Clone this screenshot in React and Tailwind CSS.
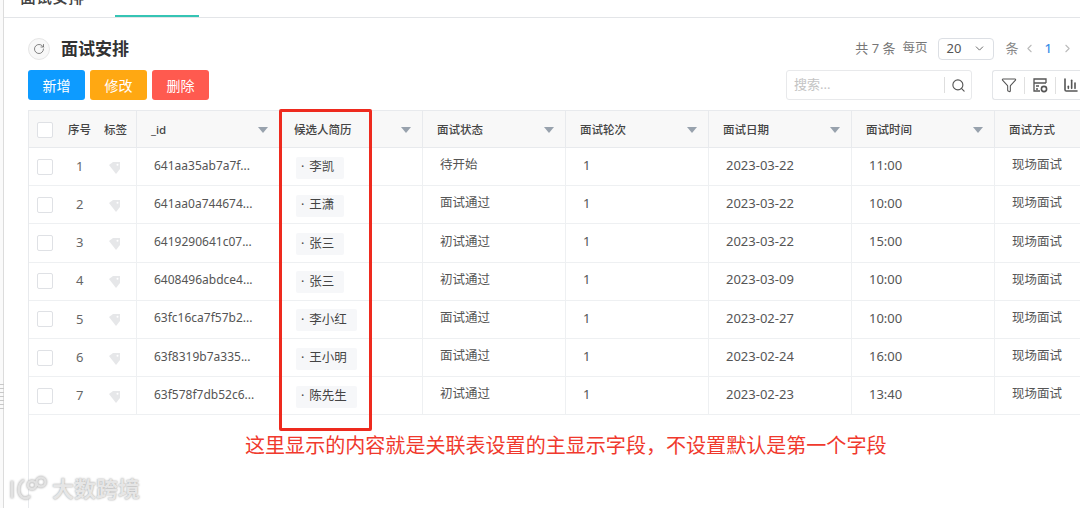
import { RotateCw, ChevronDown, ChevronLeft, ChevronRight, Search, Funnel, ChartColumn } from "lucide-react"

const FONT = { fontFamily: '"Noto Sans", "Noto Sans CJK SC", sans-serif' }

const COLUMNS = ["面试状态", "面试轮次", "面试日期", "面试时间"]

const ROWS = [
  { id: "641aa35ab7a7f...", name: "李凯", status: "待开始", date: "2023-03-22", time: "11:00" },
  { id: "641aa0a744674...", name: "王潇", status: "面试通过", date: "2023-03-22", time: "10:00" },
  { id: "6419290641c07...", name: "张三", status: "初试通过", date: "2023-03-22", time: "15:00" },
  { id: "6408496abdce4...", name: "张三", status: "初试通过", date: "2023-03-09", time: "10:00" },
  { id: "63fc16ca7f57b2...", name: "李小红", status: "面试通过", date: "2023-02-27", time: "10:00" },
  { id: "63f8319b7a335...", name: "王小明", status: "面试通过", date: "2023-02-24", time: "16:00" },
  { id: "63f578f7db52c6...", name: "陈先生", status: "初试通过", date: "2023-02-23", time: "13:40" },
]

function Caret() {
  return <span className="ml-auto mr-[11px] h-0 w-0 border-x-[5px] border-t-[6px] border-x-transparent border-t-[#98a2ad]" />
}

function Checkbox() {
  return <span className="h-[16px] w-[16px] shrink-0 rounded-[2px] border border-[#dfe1e5] bg-white" />
}

function HeadCell({ label, caret = true, className = "w-[143px]" }) {
  return (
    <div className={`flex h-full shrink-0 items-center border-r border-[#e8eaed] pl-[14px] pt-[1px] text-[11.5px] font-medium text-[#444] ${className}`}>
      {label}
      {caret && <Caret />}
    </div>
  )
}

function Cell({ children, className = "" }) {
  return (
    <div className={`flex h-full w-[143px] shrink-0 items-center border-r border-[#eef0f2] pb-[2px] pl-[17px] text-[#555] ${className}`}>
      {children}
    </div>
  )
}

function TagIcon() {
  return (
    <svg width="14" height="14" viewBox="0 0 14 14" className="ml-[25px] mt-[2px]">
      <path d="M1 4 L5 1 H12 V8 L8 13 Z" fill="#e6e7e9" />
      <circle cx="9.5" cy="3.8" r="1" fill="#fff" />
    </svg>
  )
}

function ConfigIcon() {
  return (
    <svg width="16" height="16" viewBox="0 0 16 16" fill="none" stroke="#555" strokeWidth="1.3">
      <path d="M14 6V2H2v12h6" />
      <path d="M2 6h12M4 9h3M4 12h2" />
      <circle cx="12" cy="12" r="2.6" strokeWidth="1.6" />
    </svg>
  )
}

function Toolbar() {
  return (
    <div className="flex h-[30px] w-[100px] shrink-0 items-center rounded-l-[3px] border-y border-l border-[#e3e5e8] bg-white pl-[8px] text-[#555]">
      <Funnel size={16} strokeWidth={1.6} />
      <span className="mx-[7px] h-[17px] border-l border-[#e0e0e0]" />
      <ConfigIcon />
      <span className="mx-[7px] h-[17px] border-l border-[#e0e0e0]" />
      <ChartColumn size={16} strokeWidth={2.4} />
    </div>
  )
}

export default function App() {
  return (
    <div className="relative h-[508px] w-[1080px] overflow-hidden bg-white" style={FONT}>
      {/* Top tabs */}
      <div className="ml-[4px] flex h-[18px] items-end overflow-hidden border-b border-[#e3e5e8] pl-[16px]">
        <div className="mb-[9px] w-[95px] shrink-0 text-[16px] font-medium leading-[22px] text-[#444]">面试安排</div>
        <div className="h-[2px] w-[84px] bg-[#35c4b4]" />
      </div>

      <div className="absolute bottom-0 left-0 top-0 w-[4px] border-r border-[#dcdcdc] bg-[#fafafa]" />
      <div className="absolute left-0 top-[384px] flex w-[4px] flex-col gap-[3px]">
        {[0, 1, 2, 3, 4, 5, 6].map((n) => (
          <span key={n} className="h-px w-full bg-[#c8c8c8]" />
        ))}
      </div>

      <div className="pl-[28px]">
        {/* Title and pagination */}
        <div className="flex h-[52px] items-center pr-[6px] pt-[9px]">
          <span className="flex h-[22px] w-[22px] items-center justify-center rounded-full border border-[#e6e6e6] bg-[#f8f8f8] text-[#666]">
            <RotateCw size={12} strokeWidth={1.6} />
          </span>
          <span className="ml-[11px] text-[17px] font-bold text-[#333]">面试安排</span>
          <span className="ml-auto text-[13px] text-[#777]">共 7 条</span>
          <span className="ml-[7px] text-[12.5px] text-[#777]">每页</span>
          <span className="ml-[10px] flex h-[22px] w-[56px] items-center justify-between rounded-[4px] border border-[#dcdfe4] pl-[8px] pr-[7px] text-[13px] text-[#555]">
            20
            <ChevronDown size={13} strokeWidth={1.6} />
          </span>
          <span className="ml-[12px] text-[13px] text-[#888]">条</span>
          <ChevronLeft size={13} className="ml-[4px] text-[#bbb]" />
          <span className="ml-[9px] text-[13px] font-medium text-[#3f8fe8]">1</span>
          <ChevronRight size={13} className="ml-[9px] text-[#bbb]" />
        </div>

        {/* Buttons and search */}
        <div className="flex h-[30px] items-center">
          <button className="h-[30px] w-[57px] shrink-0 rounded-[3px] bg-[#0d9bff] text-[14px] text-white">新增</button>
          <button className="ml-[5px] h-[30px] w-[57px] shrink-0 rounded-[3px] bg-[#ffa812] text-[14px] text-white">修改</button>
          <button className="ml-[5px] h-[30px] w-[57px] shrink-0 rounded-[3px] bg-[#ff5a4f] text-[14px] text-white">删除</button>
          <div className="ml-[577px] flex h-[30px] w-[186px] shrink-0 items-center rounded-[3px] border border-[#e8e9eb] pl-[7px] text-[13px] text-[#c4c4c4]">
            搜索...
            <span className="ml-auto h-[16px] border-l border-[#dedede]" />
            <Search size={15} strokeWidth={1.8} className="ml-[6px] mr-[5px] text-[#555]" />
          </div>
          <div className="ml-[20px] shrink-0">
            <Toolbar />
          </div>
        </div>

        {/* Table */}
        <div className="mt-[10px] h-[398px] w-[1052px] overflow-hidden border-l border-[#e8eaed]">
          <div className="flex h-[38px] w-[1200px] items-center border-y border-[#e8eaed] bg-[#f8f8f8]">
            <div className="flex h-full w-[108px] shrink-0 items-center border-r border-[#e8eaed] pl-[8px] pt-[1px] text-[11.5px] font-medium text-[#444]">
              <Checkbox />
              <span className="ml-[15px]">序号</span>
              <span className="ml-[13px]">标签</span>
            </div>
            <HeadCell label="_id" />
            <HeadCell label="候选人简历" />
            {COLUMNS.map((c) => (
              <HeadCell key={c} label={c} />
            ))}
            <HeadCell label="面试方式" caret={false} />
          </div>

          {ROWS.map((r, i) => (
            <div key={r.id} className="flex h-[38.2px] w-[1200px] items-center border-b border-[#eef0f2]">
              <div className="flex h-full w-[108px] shrink-0 items-center border-r border-[#eef0f2] pl-[8px] text-[13px] text-[#666]">
                <Checkbox />
                <span className="ml-[23px] w-[7px]">{i + 1}</span>
                <TagIcon />
              </div>
              <Cell className="text-[12px]">{r.id}</Cell>
              <Cell>
                <span className="-ml-[1px] mt-[4px] flex h-[22px] items-center rounded-[2px] bg-[#f6f7f9] pl-[5px] pr-[10px] text-[12.5px] text-[#444]">
                  <span className="mr-[5px]">·</span>
                  {r.name}
                </span>
              </Cell>
              <Cell className="text-[12.5px]">{r.status}</Cell>
              <Cell className="text-[13px]">1</Cell>
              <Cell className="text-[13px]">{r.date}</Cell>
              <Cell className="text-[13px]">{r.time}</Cell>
              <Cell className="text-[12.5px]">现场面试</Cell>
            </div>
          ))}
        </div>
      </div>

      {/* Annotation drawn over the screenshot */}
      <div className="absolute left-[279px] top-[109px] h-[322px] w-[93px] rounded-[2px] border-[3px] border-[#ee2a1e]" />
      <div className="absolute left-[245px] top-[432px] text-[20.06px] leading-[28px] text-[#f0392d]">
        这里显示的内容就是关联表设置的主显示字段，不设置默认是第一个字段
      </div>

      {/* Watermark */}
      <div className="absolute left-[9px] top-[473px] flex items-center">
        <svg width="39" height="30" viewBox="0 0 39 30" fill="none" stroke="#e2e2e2" strokeWidth="2.5" className="drop-shadow-[0_0_1px_#999]">
          <path d="M3 8v17M15 7c-6 3-7 13-2 17 3 2 6 1 8-1" />
          <circle cx="23" cy="12" r="4" />
          <circle cx="32" cy="9" r="4.5" />
        </svg>
        <span className="ml-[4px] text-[22px] font-bold leading-[30px] text-[#e6e6e6] [text-shadow:0_0_2px_#999]">大数跨境</span>
      </div>
    </div>
  )
}
